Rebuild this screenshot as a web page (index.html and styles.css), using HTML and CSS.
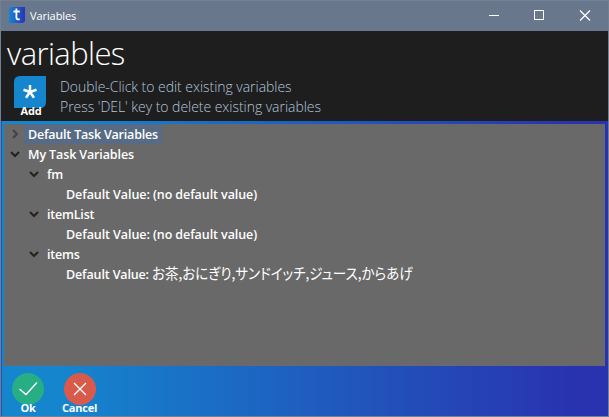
FILE: index.html
```html
<!DOCTYPE html>
<html lang="en">
<head>
<meta charset="utf-8">
<title>Variables</title>
<link rel="stylesheet" href="styles.css">
</head>
<body>
<div class="window">
  <header class="titlebar">
    <svg class="app-icon" width="16" height="16" viewBox="0 0 16 16">
      <defs><linearGradient id="g"><stop offset="0" stop-color="#1585d0"/><stop offset="1" stop-color="#2933b8"/></linearGradient></defs>
      <path d="M3 0H16V13Q16 16 13 16H0V3Q0 0 3 0Z" fill="url(#g)"/>
      <path d="M7.400 1.500V10.500Q7.400 12.800 10.700 12.200M4.500 4.500H10.800" fill="none" stroke="#fff" stroke-width="1.8"/>
    </svg>
    <span class="caption">Variables</span>
    <svg class="controls" width="138" height="30" viewBox="0 0 138 30" fill="none" stroke="#fff">
      <path d="M19 14.500H29M64.500 9.500H73.500V18.500H64.500Z" shape-rendering="crispEdges"/>
      <path d="M110 9.500L120 19.500M120 9.500L110 19.500" stroke-width="1.2"/>
    </svg>
  </header>
  <section class="intro">
    <h1>variables</h1>
    <div class="intro-row">
      <button class="add">
        <svg width="32" height="32" viewBox="0 0 32 32">
          <path d="M6 0H32V26Q32 32 26 32H0V6Q0 0 6 0Z" fill="#1585cd"/>
          <path d="M16 16V9M16 16L22.500 13.800M16 16L20 21.700M16 16L12 21.700M16 16L9.500 13.800" stroke="#fff" stroke-width="2.5"/>
        </svg>
        <span>Add</span>
      </button>
      <p>Double-Click to edit existing variables<br>Press 'DEL' key to delete existing variables</p>
    </div>
  </section>
  <main class="frame">
    <div class="tree">
      <div class="row"><svg class="chev closed" viewBox="0 0 10 10"><path d="M3 1L7 5L3 9"/></svg><span class="label selected">Default Task Variables</span></div>
      <div class="row"><svg class="chev" viewBox="0 0 10 10"><path d="M1 3L5 7L9 3"/></svg><span class="label top">My Task Variables</span></div>
      <div class="row child"><svg class="chev" viewBox="0 0 10 10"><path d="M1 3L5 7L9 3"/></svg><span class="label">fm</span></div>
      <div class="row leaf"><span class="label value">Default Value: (no default value)</span></div>
      <div class="row child"><svg class="chev" viewBox="0 0 10 10"><path d="M1 3L5 7L9 3"/></svg><span class="label">itemList</span></div>
      <div class="row leaf"><span class="label value">Default Value: (no default value)</span></div>
      <div class="row child"><svg class="chev" viewBox="0 0 10 10"><path d="M1 3L5 7L9 3"/></svg><span class="label">items</span></div>
      <div class="row leaf"><span class="label value key">Default Value:</span><span class="jp" lang="ja">お茶,おにぎり,サンドイッチ,ジュース,からあげ</span></div>
    </div>
    <footer class="actions">
      <button class="action"><svg width="32" height="32" viewBox="0 0 32 32"><circle cx="16" cy="16" r="16" fill="#27ae85"/><path d="M7.500 16L14 21.500L25 9.500"/></svg><span>Ok</span></button>
      <button class="action"><svg width="32" height="32" viewBox="0 0 32 32"><circle cx="16" cy="16" r="16" fill="#d75a4a"/><path d="M10 10L22 22M22 10L10 22"/></svg><span>Cancel</span></button>
    </footer>
  </main>
</div>
</body>
</html>
```
FILE: styles.css
```css
* { box-sizing: border-box; }
body { margin: 0; background: #1e1e1e; font-family: "Open Sans", "Noto Sans CJK JP", sans-serif; overflow: hidden; }
svg { display: block; flex: none; }
button { border: 0; padding: 0; background: none; color: #fff; font: 700 11px/12px "Open Sans", sans-serif; letter-spacing: -.2px; }
.window { width: 609px; height: 417px; border: 1px solid #728094; display: flex; flex-direction: column; background: #1e1e1e; }
.titlebar { height: 30px; background: #69778c; display: flex; align-items: center; color: #fff; padding-left: 8px; }
.app-icon { margin-top: -2px; }
.caption { font-size: 11px; line-height: 16px; margin-left: 5px; letter-spacing: -.08px; }
.controls { margin-left: auto; }
.intro { height: 90px; padding-left: 6px; color: #fff; }
h1 { margin: 0; font-weight: 300; font-size: 31px; line-height: 45px; height: 45px; letter-spacing: -.6px; }
.intro-row { display: flex; }
.add { width: 34px; margin-left: 7px; display: flex; flex-direction: column; align-items: center; }
.add svg { align-self: flex-start; }
.add span, .action span { margin-top: -3px; position: relative; }
.intro p { margin: 1px 0 0 12px; font-weight: 300; font-size: 14px; line-height: 20px; color: #b3c6dd; white-space: nowrap; letter-spacing: -.04px; }
.frame { flex: 1; background: linear-gradient(90deg, #1585cd 0%, #1585cd 10%, #2933b0 94%, #2933b0 100%); border-left: 1px solid #2450b9; padding: 3px 3px 0 2px; }
.tree { background: #696969; height: 242px; color: #fff; }
.row { height: 20px; display: flex; align-items: center; padding-left: 6px; }
.row.child { padding-left: 25px; }
.row.leaf { padding-left: 58px; }
.chev { width: 10px; height: 10px; margin-right: 4px; fill: none; stroke: #222; stroke-width: 2; }
.chev.closed { stroke: #424242; }
.label { font-weight: 600; font-size: 12.5px; line-height: 19px; padding: 0 4px; white-space: nowrap; letter-spacing: -.2px; }
.label.top { letter-spacing: -.12px; }
.value { letter-spacing: -.08px; }
.key { padding-right: 3px; letter-spacing: -.14px; }
.label.selected { background: #576c84; padding-top: 1px; }
.jp { font: 400 15px/20px "Noto Sans CJK JP", sans-serif; font-feature-settings: "palt"; white-space: nowrap; transform: translateY(-1px) scaleX(.9); transform-origin: left; }
.actions { display: flex; gap: 20px; padding: 7px 0 0 8px; }
.action { width: 32px; display: flex; flex-direction: column; align-items: center; }
.action svg { align-self: flex-start; }
.action path { fill: none; stroke: #fff; stroke-width: 1.4; }
.action + .action span { margin-right: 1px; }
```
